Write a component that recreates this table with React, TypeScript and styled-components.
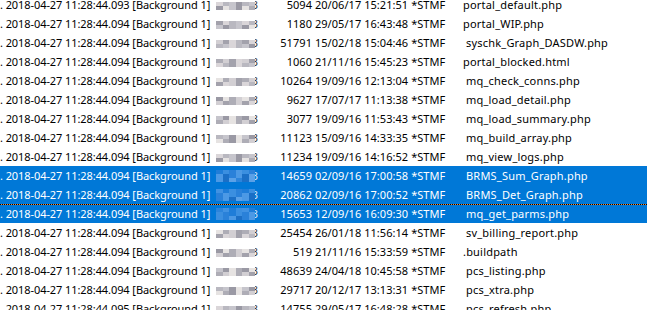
import React from 'react';
import styled, { createGlobalStyle, css } from 'styled-components';

type LogRow = {
  ms: string;
  size: string;
  stamp: string;
  file: string;
  shift: number;
  selected?: boolean;
  focused?: boolean;
};

const rows: LogRow[] = [
  { ms: '093', size: '5094', stamp: '20/06/17 15:21:51', file: 'portal_default.php', shift: 0 },
  { ms: '094', size: '1180', stamp: '29/05/17 16:43:48', file: 'portal_WIP.php', shift: 0 },
  { ms: '094', size: '51791', stamp: '15/02/18 15:04:46', file: 'syschk_Graph_DASDW.php', shift: 3 },
  { ms: '094', size: '1060', stamp: '21/11/16 15:45:23', file: 'portal_blocked.html', shift: 0 },
  { ms: '094', size: '10264', stamp: '19/09/16 12:13:04', file: 'mq_check_conns.php', shift: 3 },
  { ms: '094', size: '9627', stamp: '17/07/17 11:13:38', file: 'mq_load_detail.php', shift: 3 },
  { ms: '094', size: '3077', stamp: '19/09/16 11:53:43', file: 'mq_load_summary.php', shift: 3 },
  { ms: '094', size: '11123', stamp: '15/09/16 14:33:35', file: 'mq_build_array.php', shift: 3 },
  { ms: '094', size: '11234', stamp: '19/09/16 14:16:52', file: 'mq_view_logs.php', shift: 3 },
  { ms: '094', size: '14659', stamp: '02/09/16 17:00:58', file: 'BRMS_Sum_Graph.php', shift: 3, selected: true },
  { ms: '094', size: '20862', stamp: '02/09/16 17:00:52', file: 'BRMS_Det_Graph.php', shift: 3, selected: true },
  { ms: '094', size: '15653', stamp: '12/09/16 16:09:30', file: 'mq_get_parms.php', shift: 3, selected: true, focused: true },
  { ms: '094', size: '25454', stamp: '26/01/18 11:56:14', file: 'sv_billing_report.php', shift: 3 },
  { ms: '094', size: '519', stamp: '21/11/16 15:33:59', file: '.buildpath', shift: -3 },
  { ms: '094', size: '48639', stamp: '24/04/18 10:45:58', file: 'pcs_listing.php', shift: 3 },
  { ms: '094', size: '29717', stamp: '20/12/17 13:13:31', file: 'pcs_xtra.php', shift: 3 },
  { ms: '095', size: '14755', stamp: '29/05/17 16:48:28', file: 'pcs_refresh.php', shift: 3 },
];

const greys = ['#dad6d9', '#aeadb6', '#c6c5cc', '#a3a2ac', '#e6e3e2', '#b9b8c0', '#d2cfd3', '#9a99a4'];
const blues = ['#3b8fe0', '#2c84db', '#4c99e5', '#1f7dd8', '#5ba1e7', '#2a81d9', '#4192e2', '#1b6fc6'];

const GlobalStyle = createGlobalStyle`
  html, body {
    margin: 0;
    padding: 0;
    background: #fff;
    overflow: hidden;
  }
  body {
    font-family: "Noto Sans", "Open Sans", sans-serif;
  }
`;

const ListView = styled.div`
  width: 647px;
  height: 310px;
  overflow: hidden;
  background: #fff;
`;

const RowStack = styled.div`
  display: flex;
  flex-direction: column;
  margin-top: -5px;
`;

const Row = styled.div<{ $selected?: boolean; $focused?: boolean }>`
  position: relative;
  display: grid;
  grid-template-columns: 214px 47px 51px 151px 1fr;
  align-items: start;
  height: 19px;
  box-sizing: border-box;
  padding-top: 1px;
  font-size: 11px;
  line-height: 18px;
  white-space: nowrap;
  color: ${(p) => (p.$selected ? '#fff' : '#000')};
  background: ${(p) => (p.$selected ? '#0078d7' : '#fff')};

  ${(p) =>
    p.$focused &&
    css`
      &::before {
        content: '';
        position: absolute;
        left: 0;
        right: 0;
        top: 0;
        height: 1px;
        background: repeating-linear-gradient(90deg, #000 0 1px, #ff8728 1px 2px);
      }
    `}
`;

const Cell = styled.div<{ $align?: 'left' | 'right' }>`
  text-align: ${(p) => p.$align ?? 'left'};
`;

const Stamp = styled(Cell)`
  letter-spacing: -0.08px;
`;

const Numbers = styled(Cell)`
  letter-spacing: 0.05px;
`;

const FileName = styled(Cell)<{ $shift: number }>`
  padding-left: ${(p) => p.$shift}px;
  letter-spacing: 0.2px;
`;

const Hidden = styled.div`
  display: flex;
  align-items: center;
  height: 18px;
  padding-left: 2px;
`;

const Mosaic = styled.div<{ $rowsCount: number }>`
  display: grid;
  grid-template-columns: repeat(6, 6.5px);
  grid-template-rows: repeat(${(p) => p.$rowsCount}, 4px);
  margin-top: ${(p) => (p.$rowsCount > 2 ? 0 : 1)}px;
`;

const Block = styled.span<{ $c: string }>`
  background: ${(p) => p.$c};
`;

const Fragment = styled.span`
  display: inline-block;
  width: 3px;
  overflow: hidden;
  direction: rtl;
  line-height: 18px;
  opacity: 0.8;
`;

const Blurred = ({ seed, selected }: { seed: number; selected?: boolean }) => {
  const palette = selected ? blues : greys;
  const count = selected ? 3 : 2;
  const blocks = Array.from({ length: 6 * count }, (_, i) => palette[(i * 5 + seed * 3 + (i >> 2)) % palette.length]);
  return (
    <Hidden>
      <Mosaic $rowsCount={count}>
        {blocks.map((c, i) => (
          <Block key={i} $c={c} />
        ))}
      </Mosaic>
      <Fragment>3</Fragment>
    </Hidden>
  );
};

export default function App() {
  return (
    <>
      <GlobalStyle />
      <ListView>
        <RowStack>
          {rows.map((r, i) => (
            <Row key={i} $selected={r.selected} $focused={r.focused}>
              <Stamp>. 2018-04-27 11:28:44.{r.ms} [Background 1]</Stamp>
              <Blurred seed={i} selected={r.selected} />
              <Numbers $align='right'>{r.size}</Numbers>
              <Numbers>&nbsp;{r.stamp} *STMF</Numbers>
              <FileName $shift={r.shift}>{r.file}</FileName>
            </Row>
          ))}
        </RowStack>
      </ListView>
    </>
  );
}
